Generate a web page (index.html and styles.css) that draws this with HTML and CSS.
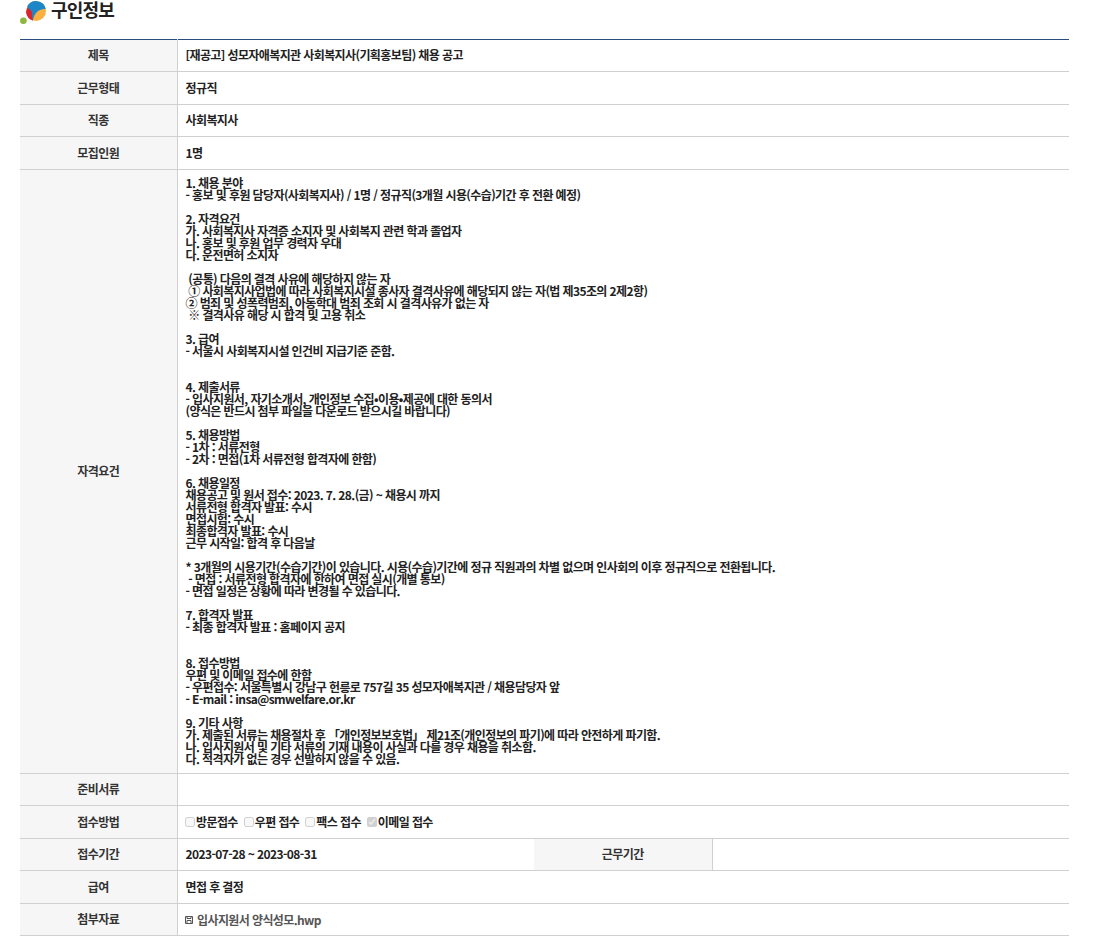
FILE: index.html
```html
<!DOCTYPE html>
<html lang="ko">
<head>
<meta charset="utf-8">
<title>구인정보</title>
<link rel="stylesheet" href="styles.css">
</head>
<body>
<h2 class="title">
<svg class="logo" width="27" height="25" viewBox="0 0 27 25"><circle cx="3.4" cy="20.7" r="3.3" fill="#8cb63c"/><circle cx="16" cy="11" r="10" fill="#fbb040"/><path d="M7.500 5.700 A10 10 0 0 1 25.800 9 C20 8.500 14 12 13 20.600 C10 19 7 15 7.500 5.700Z" fill="#1b87c9"/><path d="M7.500 8 C10 9 12 11 12.300 14 C11.800 16 12.200 18.500 13 20.600 A10 10 0 0 1 6.100 12.500 C6.200 10.800 6.700 9.300 7.500 8Z" fill="#d9232e"/></svg>
<span>구인정보</span>
</h2>
<table class="info">
<colgroup><col class="c1"><col class="c2"><col class="c3"><col class="c4"></colgroup>
<tbody>
<tr><th>제목</th><td colspan="3">[재공고] 성모자애복지관 사회복지사(기획홍보팀) 채용 공고</td></tr>
<tr><th>근무형태</th><td colspan="3">정규직</td></tr>
<tr><th>직종</th><td colspan="3">사회복지사</td></tr>
<tr><th>모집인원</th><td colspan="3">1명</td></tr>
<tr><th>자격요건</th><td colspan="3" class="long">1. 채용 분야<br>
- 홍보 및 후원 담당자(사회복지사) / 1명 / 정규직(3개월 시용(수습)기간 후 전환 예정)<br>
<br>
2. 자격요건<br>
가. 사회복지사 자격증 소지자 및 사회복지 관련 학과 졸업자<br>
나. 홍보 및 후원 업무 경력자 우대<br>
다. 운전면허 소지자<br>
<br>
&nbsp;(공통) 다음의 결격 사유에 해당하지 않는 자<br>
&nbsp;① 사회복지사업법에 따라 사회복지시설 종사자 결격사유에 해당되지 않는 자(법 제35조의 2제2항)<br>
② 범죄 및 성폭력범죄, 아동학대 범죄 조회 시 결격사유가 없는 자<br>
&nbsp;※ 결격사유 해당 시 합격 및 고용 취소<br>
<br>
3. 급여<br>
- 서울시 사회복지시설 인건비 지급기준 준함.<br>
<br>
<br>
4. 제출서류<br>
- 입사지원서, 자기소개서, 개인정보 수집•이용•제공에 대한 동의서<br>
(양식은 반드시 첨부 파일을 다운로드 받으시길 바랍니다)<br>
<br>
5. 채용방법<br>
- 1차 : 서류전형<br>
- 2차 : 면접(1차 서류전형 합격자에 한함)<br>
<br>
6. 채용일정<br>
채용공고 및 원서 접수: 2023. 7. 28.(금) ~ 채용시 까지<br>
서류전형 합격자 발표: 수시<br>
면접시험: 수시<br>
최종합격자 발표: 수시<br>
근무 시작일: 합격 후 다음날<br>
<br>
* 3개월의 시용기간(수습기간)이 있습니다. 시용(수습)기간에 정규 직원과의 차별 없으며 인사회의 이후 정규직으로 전환됩니다.<br>
&nbsp;- 면접 : 서류전형 합격자에 한하여 면접 실시(개별 통보)<br>
- 면접 일정은 상황에 따라 변경될 수 있습니다.<br>
<br>
7. 합격자 발표<br>
- 최종 합격자 발표 : 홈페이지 공지<br>
<br>
<br>
8. 접수방법<br>
우편 및 이메일 접수에 한함<br>
- 우편접수: 서울특별시 강남구 헌릉로 757길 35 성모자애복지관 / 채용담당자 앞<br>
- E-mail : insa@smwelfare.or.kr<br>
<br>
9. 기타 사항<br>
가. 제출된 서류는 채용절차 후 「개인정보보호법」 제21조(개인정보의 파기)에 따라 안전하게 파기함.<br>
나. 입사지원서 및 기타 서류의 기재 내용이 사실과 다를 경우 채용을 취소함.<br>
다. 적격자가 없는 경우 선발하지 않을 수 있음.</td></tr>
<tr><th>준비서류</th><td colspan="3"></td></tr>
<tr><th>접수방법</th><td colspan="3"><span class="opts"><label class="opt"><input type="checkbox" disabled>방문접수</label><label class="opt"><input type="checkbox" disabled>우편 접수</label><label class="opt"><input type="checkbox" disabled>팩스 접수</label><label class="opt"><input type="checkbox" disabled checked>이메일 접수</label></span></td></tr>
<tr><th>접수기간</th><td>2023-07-28 ~ 2023-08-31</td><th>근무기간</th><td></td></tr>
<tr><th>급여</th><td colspan="3">면접 후 결정</td></tr>
<tr><th>첨부자료</th><td colspan="3"><a class="file"><svg width="8" height="8" viewBox="0 0 8 8"><path d="M.5.5h7v7h-7zM2 .5v2h4v-2M2 7.500v-3h4v3" fill="none" stroke="#555" stroke-width="1"/></svg>입사지원서 양식성모.hwp</a></td></tr>
</tbody>
</table>
</body>
</html>
```
FILE: styles.css
```css
* { box-sizing: border-box; }
body {
  margin: 0;
  padding: 0 24px 0 20px;
  background: #fff;
  color: #222;
  font-family: "Noto Sans CJK KR", "Noto Sans", sans-serif;
  font-size: 12px;
}
.title {
  display: flex;
  align-items: flex-start;
  gap: 4px;
  height: 38.5px;
  margin: 0;
  font-size: 18px;
  font-weight: 700;
  line-height: 18px;
  letter-spacing: -0.8px;
  color: #222;
}
.logo { flex: none; }
.info {
  width: 1049px;
  table-layout: fixed;
  border-collapse: collapse;
  border-top: 1px solid #2b4c7e;
}
.c1 { width: 157px; }
.c2 { width: 357px; }
.c3 { width: 178px; }
th, td {
  height: 32.5px;
  padding: 0 8px;
  border-bottom: 1px solid #d0d0d0;
  line-height: 12px;
  letter-spacing: -0.6px;
  font-weight: 700;
}
th {
  background: #f6f6f6;
  border-right: 1px solid #d0d0d0;
  text-align: center;
  color: #333;
}
td { text-align: left; }
.long { padding: 7px 8px 8px; }
.opts { display: flex; gap: 6px; align-items: center; margin-left: -0.5px; }
.opt { display: inline-flex; align-items: center; }
.opt input { width: 10px; height: 10px; margin: 0 1px 0 0; }
.file { display: inline-flex; align-items: center; gap: 4px; margin-left: -0.5px; color: #555; }
```
